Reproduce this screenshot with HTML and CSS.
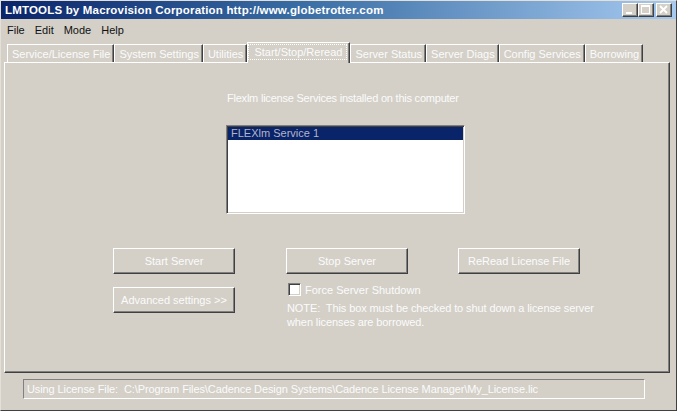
FILE: index.html
```html
<!DOCTYPE html>
<html>
<head>
<meta charset="utf-8">
<title>LMTOOLS</title>
<link rel="stylesheet" href="styles.css">
</head>
<body>
<div class="window">
  <div class="titlebar">
    <span class="title">LMTOOLS by Macrovision Corporation http://www.globetrotter.com</span>
    <div class="caption-btns">
      <span class="cbtn"><svg width="14" height="12" viewBox="0 0 14 12"><rect x="3" y="8" width="6" height="2" fill="#fff"/></svg></span>
      <span class="cbtn"><svg width="14" height="12" viewBox="0 0 14 12"><rect x="2.5" y="1.5" width="8" height="8" fill="none" stroke="#fff"/><rect x="2" y="1" width="9" height="2" fill="#fff"/></svg></span>
      <span class="cbtn close"><svg width="14" height="12" viewBox="0 0 14 12"><path d="M3 2 L10 9 M10 2 L3 9" stroke="#fff" stroke-width="1.8"/></svg></span>
    </div>
  </div>
  <div class="menubar">
    <span class="menu">File</span>
    <span class="menu">Edit</span>
    <span class="menu">Mode</span>
    <span class="menu">Help</span>
  </div>
  <div class="tabs">
    <span class="tab">Service/License File</span>
    <span class="tab">System Settings</span>
    <span class="tab">Utilities</span>
    <span class="tab active"><span class="focus">Start/Stop/Reread</span></span>
    <span class="tab">Server Status</span>
    <span class="tab">Server Diags</span>
    <span class="tab">Config Services</span>
    <span class="tab">Borrowing</span>
  </div>
  <div class="panel">
    <div class="services">
      <div class="label">Flexlm license Services installed on this computer</div>
      <div class="listbox">
        <div class="item selected">FLEXlm Service 1</div>
      </div>
    </div>
    <div class="controls">
      <button class="btn">Start Server</button>
      <button class="btn col3">Stop Server</button>
      <button class="btn col5">ReRead License File</button>
      <button class="btn adv">Advanced settings &gt;&gt;</button>
      <div class="force">
        <div class="check"><span class="box"></span><span>Force Server Shutdown</span></div>
        <p class="note">NOTE:&nbsp; This box must be checked to shut down a license server<br>when licenses are borrowed.</p>
      </div>
    </div>
  </div>
  <div class="status">Using License File:&nbsp; C:\Program Files\Cadence Design Systems\Cadence License Manager\My_License.lic</div>
</div>
</body>
</html>
```
FILE: styles.css
```css
* { box-sizing: border-box; }
html, body { margin: 0; padding: 0; }
body {
  width: 677px;
  height: 411px;
  overflow: hidden;
  background: #d4d0c8;
  font-family: "Liberation Sans", Arial, sans-serif;
  font-size: 11px;
  color: #fbfbfb;
}
.window {
  width: 677px;
  height: 411px;
  background: #d4d0c8;
  border: 1px solid;
  border-color: #e4e0d8 #404040 #404040 #e4e0d8;
  display: flex;
  flex-direction: column;
}
.titlebar {
  height: 18px;
  flex: none;
  display: flex;
  align-items: center;
  justify-content: space-between;
  padding: 0 4px 0 4px;
  background: linear-gradient(to right, #0a246a 0%, #3a6ea5 45%, #a6caf0 100%);
}
.title {
  color: #fff;
  font-weight: bold;
  font-size: 11.5px;
  letter-spacing: 0.18px;
  white-space: nowrap;
}
.caption-btns { display: flex; align-items: center; }
.cbtn {
  width: 16px;
  height: 14px;
  display: flex;
  align-items: center;
  justify-content: center;
  background: #d4d0c8;
  border: 1px solid;
  border-color: #fff #404040 #404040 #fff;
  box-shadow: inset -1px -1px #808080;
}
.cbtn.close { margin-left: 2px; }
.menubar {
  flex: none;
  height: 19px;
  margin-top: 2px;
  padding-left: 1px;
  display: flex;
  align-items: center;
  color: #111;
}
.menu { padding: 0 5px; line-height: 19px; }
.tabs {
  flex: none;
  height: 21px;
  margin-top: 2px;
  padding-left: 6px;
  display: flex;
  align-items: flex-start;
  position: relative;
  z-index: 1;
  margin-bottom: -1px;
}
.tab {
  margin-top: 2px;
  height: 18px;
  line-height: 16px;
  padding: 1px 3px 0 4px;
  border-top: 1px solid #fff;
  border-left: 1px solid #fff;
  border-right: 1px solid #404040;
  box-shadow: inset -1px 0 #808080;
  white-space: nowrap;
}
.tab.active {
  margin-top: 0;
  height: 21px;
  padding: 1px 3px 0 1px;
  background: #d4d0c8;
}
.focus {
  display: inline-block;
  line-height: 14px;
  padding: 0 4px 0 5px;
  outline: 1px dotted #fff;
  outline-offset: 0;
  margin-top: 1px;
}
.panel {
  flex: none;
  margin-left: 3px;
  width: 666px;
  height: 311px;
  border-top: 1px solid #fff;
  border-left: 1px solid #fff;
  border-right: 1px solid #404040;
  border-bottom: 1px solid #404040;
  box-shadow: inset -1px -1px #808080;
}
.services {
  margin-top: 29px;
  margin-left: 221px;
  width: 239px;
}
.label { padding-left: 1px; line-height: 13px; white-space: nowrap; letter-spacing: -0.22px; }
.listbox {
  margin-top: 20px;
  width: 239px;
  height: 89px;
  background: #fff;
  border: 1px solid;
  border-color: #808080 #fff #fff #808080;
  box-shadow: inset 1px 1px #404040, inset -1px -1px #d4d0c8;
  padding: 1px;
}
.item {
  height: 13px;
  line-height: 13px;
  padding-left: 3px;
}
.item.selected { background: #0a246a; color: #b4b4c8; }
.controls {
  margin-top: 34px;
  margin-left: 108px;
  display: grid;
  grid-template-columns: 122px 51px 122px 50px 122px;
  grid-template-rows: 26px auto;
  row-gap: 9px;
}
.btn {
  width: 122px;
  height: 26px;
  padding: 0;
  font: inherit;
  color: #fbfbfb;
  background: #d4d0c8;
  border: 1px solid;
  border-color: #fff #404040 #404040 #fff;
  box-shadow: inset -1px -1px #808080;
  text-align: center;
}
.col3 { grid-column: 3; }
.col5 { grid-column: 5; }
.adv { grid-column: 1; grid-row: 2; margin-top: 4px; }
.force { grid-column: 3 / span 3; grid-row: 2; }
.check {
  display: flex;
  align-items: center;
  height: 13px;
  gap: 4px;
  padding-left: 2px;
}
.box {
  width: 13px;
  height: 13px;
  background: #fff;
  border: 1px solid;
  border-color: #808080 #fff #fff #808080;
  box-shadow: inset 1px 1px #404040, inset -1px -1px #d4d0c8;
}
.note {
  margin: 5px 0 0 0;
  padding-left: 1px;
  line-height: 14px;
  white-space: nowrap;
  letter-spacing: -0.1px;
}
.status {
  flex: none;
  margin-top: 6px;
  margin-left: 22px;
  width: 622px;
  height: 20px;
  line-height: 18px;
  padding-left: 3px;
  border: 1px solid;
  border-color: #808080 #fff #fff #808080;
  white-space: nowrap;
  letter-spacing: -0.1px;
}
```
